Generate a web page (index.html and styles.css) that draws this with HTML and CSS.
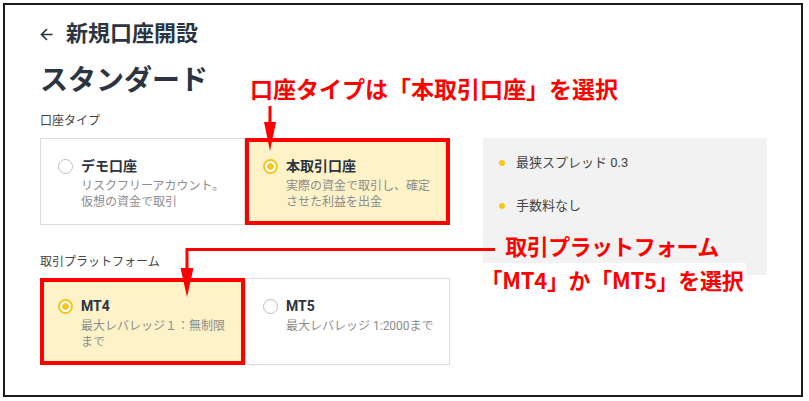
FILE: index.html
```html
<!DOCTYPE html>
<html>
<head>
 <meta http-equiv="content-type" content="text/html; charset=utf-8" />
 <title>新規口座開設</title>
 <link rel="stylesheet" href="styles.css">
</head>
<body>
 <div class="frame">
  <h1 class="back">
   <svg class="back-icon" width="13" height="13" viewBox="0 0 13 13">
    <path d="M12.5 6.5H1.5M7 1L1.5 6.5 7 12" fill="none" stroke="#2b3440" stroke-width="1.7"/>
   </svg>
   新規口座開設
  </h1>
  <h2 class="title">スタンダード</h2>

  <div class="main">
   <div class="fields">
    <div class="label">口座タイプ</div>
    <div class="options">
     <div class="opt">
      <span class="radio"></span>
      <div>
       <div class="opt-name">デモ口座</div>
       <div class="opt-desc">リスクフリーアカウント。仮想の資金で取引</div>
      </div>
     </div>
     <div class="opt on mark">
      <span class="radio"></span>
      <div>
       <div class="opt-name">本取引口座</div>
       <div class="opt-desc">実際の資金で取引し、確定させた利益を出金</div>
      </div>
     </div>
    </div>

    <div class="label second">取引プラットフォーム</div>
    <div class="options">
     <div class="opt on mark">
      <span class="radio"></span>
      <div>
       <div class="opt-name">MT4</div>
       <div class="opt-desc">最大レバレッジ１：無制限まで</div>
      </div>
     </div>
     <div class="opt">
      <span class="radio"></span>
      <div>
       <div class="opt-name">MT5</div>
       <div class="opt-desc">最大レバレッジ 1:2000まで</div>
      </div>
     </div>
    </div>
   </div>

   <ul class="panel">
    <li>最狭スプレッド 0.3</li>
    <li>手数料なし</li>
   </ul>
  </div>

  <!-- annotations -->
  <div class="note note-1">口座タイプは「本取引口座」を選択</div>
  <div class="note note-2">
   <span class="tight">取引プラットフォーム</span><br>
   <span class="white">「MT4」か「MT5」を選択</span>
  </div>
  <svg class="arrows" width="809" height="401" viewBox="0 0 809 401">
   <line x1="270" y1="106" x2="270" y2="126" stroke="#f00" stroke-width="3"/>
   <polygon points="264,122 276,122 270,151" fill="#f00"/>
   <polyline points="495,249.5 187,249.5 187,272" fill="none" stroke="#f00" stroke-width="3"/>
   <polygon points="180.5,268 193.5,268 187,297" fill="#f00"/>
  </svg>
 </div>
</body>
</html>
```

FILE: styles.css
```css
* {
 margin: 0;
 padding: 0;
 box-sizing: border-box;
}
body {
 font-family: Roboto, "Noto Sans CJK JP", sans-serif;
 background: #fff;
 color: #333;
}
.frame {
 position: relative;
 width: 800px;
 height: 394px;
 margin: 3px;
 border: 2px solid #1c1c1c;
 padding-left: 35px;
}
.back {
 display: flex;
 align-items: center;
 gap: 13px;
 margin-top: 14px;
 font-size: 22px;
 line-height: 30px;
 font-weight: 700;
 color: #2b3440;
}
.title {
 margin-top: 14px;
 font-size: 28px;
 line-height: 36px;
 font-weight: 700;
 color: #2b3440;
}
.main {
 display: flex;
 align-items: flex-start;
 margin-top: 14px;
}
.fields {
 width: 410px;
}
.label {
 font-size: 12px;
 line-height: 16px;
 color: #444;
}
.options {
 display: grid;
 grid-template-columns: 205px 205px;
 margin-top: 9px;
}
.label.second {
 margin-top: 29px;
}
.label.second + .options {
 margin-top: 8px;
}
.opt {
 display: flex;
 gap: 8px;
 height: 87px;
 padding: 17px 12px 0 17px;
 border: 1px solid #dcdcdc;
}
.opt.on {
 background: #fdf2c8;
}
.mark {
 outline: 4px solid #f00;
 outline-offset: -4px;
}
.radio {
 flex: none;
 width: 15px;
 height: 15px;
 margin-top: 3px;
 border: 1px solid #bdbdbd;
 border-radius: 50%;
 background: #fff;
}
.on .radio {
 border: 2px solid #f5c518;
 background: radial-gradient(circle, #f5c518 0 3px, #fff 3.5px);
}
.opt-name {
 font-size: 14px;
 line-height: 20px;
 font-weight: 700;
 color: #2b3440;
}
.opt-desc {
 margin-top: 2px;
 font-size: 12px;
 line-height: 16px;
 color: #8c8c8c;
}
.panel {
 list-style: none;
 width: 284px;
 height: 137px;
 margin-top: 25px;
 margin-left: 33px;
 padding: 15px 16px;
 background: #f2f2f2;
}
.panel li {
 display: flex;
 align-items: center;
 gap: 11px;
 font-size: 13px;
 line-height: 20px;
 color: #444;
}
.panel li + li {
 margin-top: 23px;
}
.panel li::before {
 content: "";
 width: 6px;
 height: 6px;
 border-radius: 50%;
 background: #f5c518;
}
.note {
 position: absolute;
 font-family: "Noto Sans CJK JP", sans-serif;
 font-weight: 700;
 color: #f00;
 white-space: nowrap;
}
.note-1 {
 left: 245px;
 top: 69px;
 font-size: 23px;
 line-height: 28px;
}
.note-2 {
 left: 467px;
 top: 223px;
 width: 280px;
 text-align: center;
 font-size: 22px;
 line-height: 34px;
}
.note-2 .tight {
 letter-spacing: -0.6px;
}
.note-2 .white {
 background: #fff;
 padding: 0 3px;
 letter-spacing: -0.3px;
}
.arrows {
 position: absolute;
 left: -5px;
 top: -5px;
 pointer-events: none;
}
```
